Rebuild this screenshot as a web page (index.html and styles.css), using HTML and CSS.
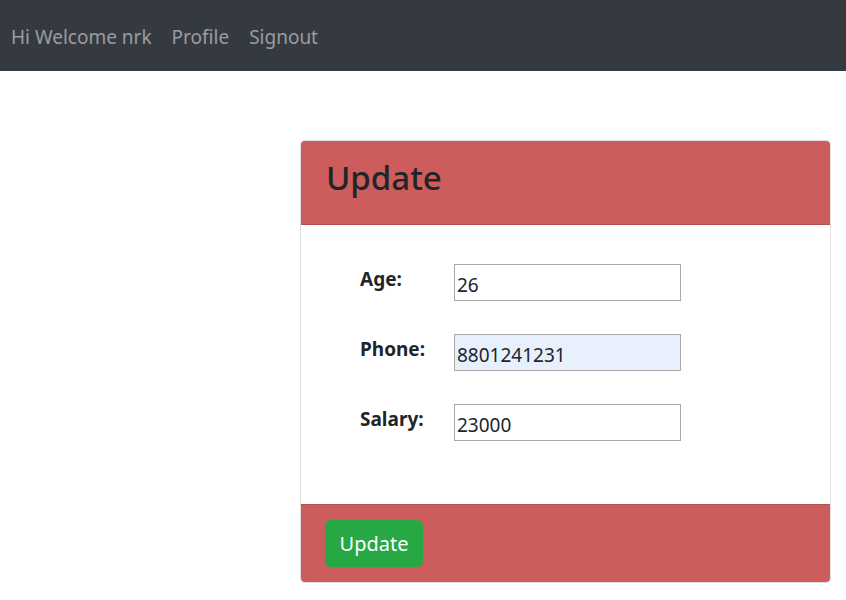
FILE: index.html
```html
<!DOCTYPE html>
<html lang="en">
<head>
<meta charset="utf-8">
<title>Update</title>
<link rel="stylesheet" href="styles.css">
</head>
<body>
<nav class="navbar">
  <a class="nav-link" href="#">Hi Welcome nrk</a>
  <a class="nav-link" href="#">Profile</a>
  <a class="nav-link" href="#">Signout</a>
</nav>
<main class="page">
  <section class="card">
    <header class="card-header">
      <h2 class="card-title">Update</h2>
    </header>
    <div class="card-body">
      <form class="form-grid">
        <label class="field-label" for="age">Age:</label>
        <input class="field-input" id="age" type="text" value="26">
        <label class="field-label" for="phone">Phone:</label>
        <input class="field-input autofilled" id="phone" type="text" value="8801241231">
        <label class="field-label" for="salary">Salary:</label>
        <input class="field-input" id="salary" type="text" value="23000">
      </form>
    </div>
    <footer class="card-footer">
      <button class="btn-update" type="button">Update</button>
    </footer>
  </section>
</main>
</body>
</html>
```
FILE: styles.css
```css
* { box-sizing: border-box; }

html, body {
  margin: 0;
  padding: 0;
  background: #fff;
}

body {
  font-family: "Noto Sans", "Open Sans", sans-serif;
  color: #212529;
}

.navbar {
  display: flex;
  align-items: center;
  height: 71px;
  padding: 0 0 0 1px;
  background: #343a40;
}

.nav-link {
  padding: 0 10px;
  font-size: 19px;
  color: rgba(255, 255, 255, 0.5);
  text-decoration: none;
  line-height: 24px;
  margin-top: 2px;
}

.page {
  padding: 69px 15px 0 300px;
}

.card {
  width: 531px;
  border: 1px solid rgba(0, 0, 0, 0.125);
  border-radius: 5px;
  overflow: hidden;
}

.card-header {
  height: 84px;
  padding: 15px 25px 0;
  background: #cd5c5c;
  border-bottom: 1px solid rgba(0, 0, 0, 0.125);
}

.card-title {
  margin: 0;
  font-size: 33px;
  font-weight: 500;
  line-height: 44px;
  color: #212529;
}

.card-body {
  height: 279px;
  padding: 39px 0 0 59px;
}

.form-grid {
  display: grid;
  grid-template-columns: 94px 227px;
  row-gap: 33px;
  align-items: start;
}

.field-label {
  padding-top: 3px;
  font-size: 19px;
  font-weight: 700;
  line-height: 24px;
  color: #212529;
}

.field-input {
  width: 227px;
  height: 37px;
  margin: 0;
  padding: 5px 2px 0;
  border: 1px solid #a9a9a9;
  border-radius: 0;
  background: #fff;
  font-family: "Noto Sans", "Open Sans", sans-serif;
  font-size: 19px;
  color: #212529;
  outline: none;
}

.field-input.autofilled {
  background: #e8f0fe;
}

.card-footer {
  padding: 15px 24px;
  background: #cd5c5c;
  border-top: 1px solid rgba(0, 0, 0, 0.125);
}

.btn-update {
  display: block;
  width: 98px;
  height: 47px;
  padding: 0;
  border: 1px solid #28a745;
  border-radius: 5px;
  background: #28a745;
  color: #fff;
  font-family: "Noto Sans", "Open Sans", sans-serif;
  font-size: 20px;
  line-height: 1;
}
```
